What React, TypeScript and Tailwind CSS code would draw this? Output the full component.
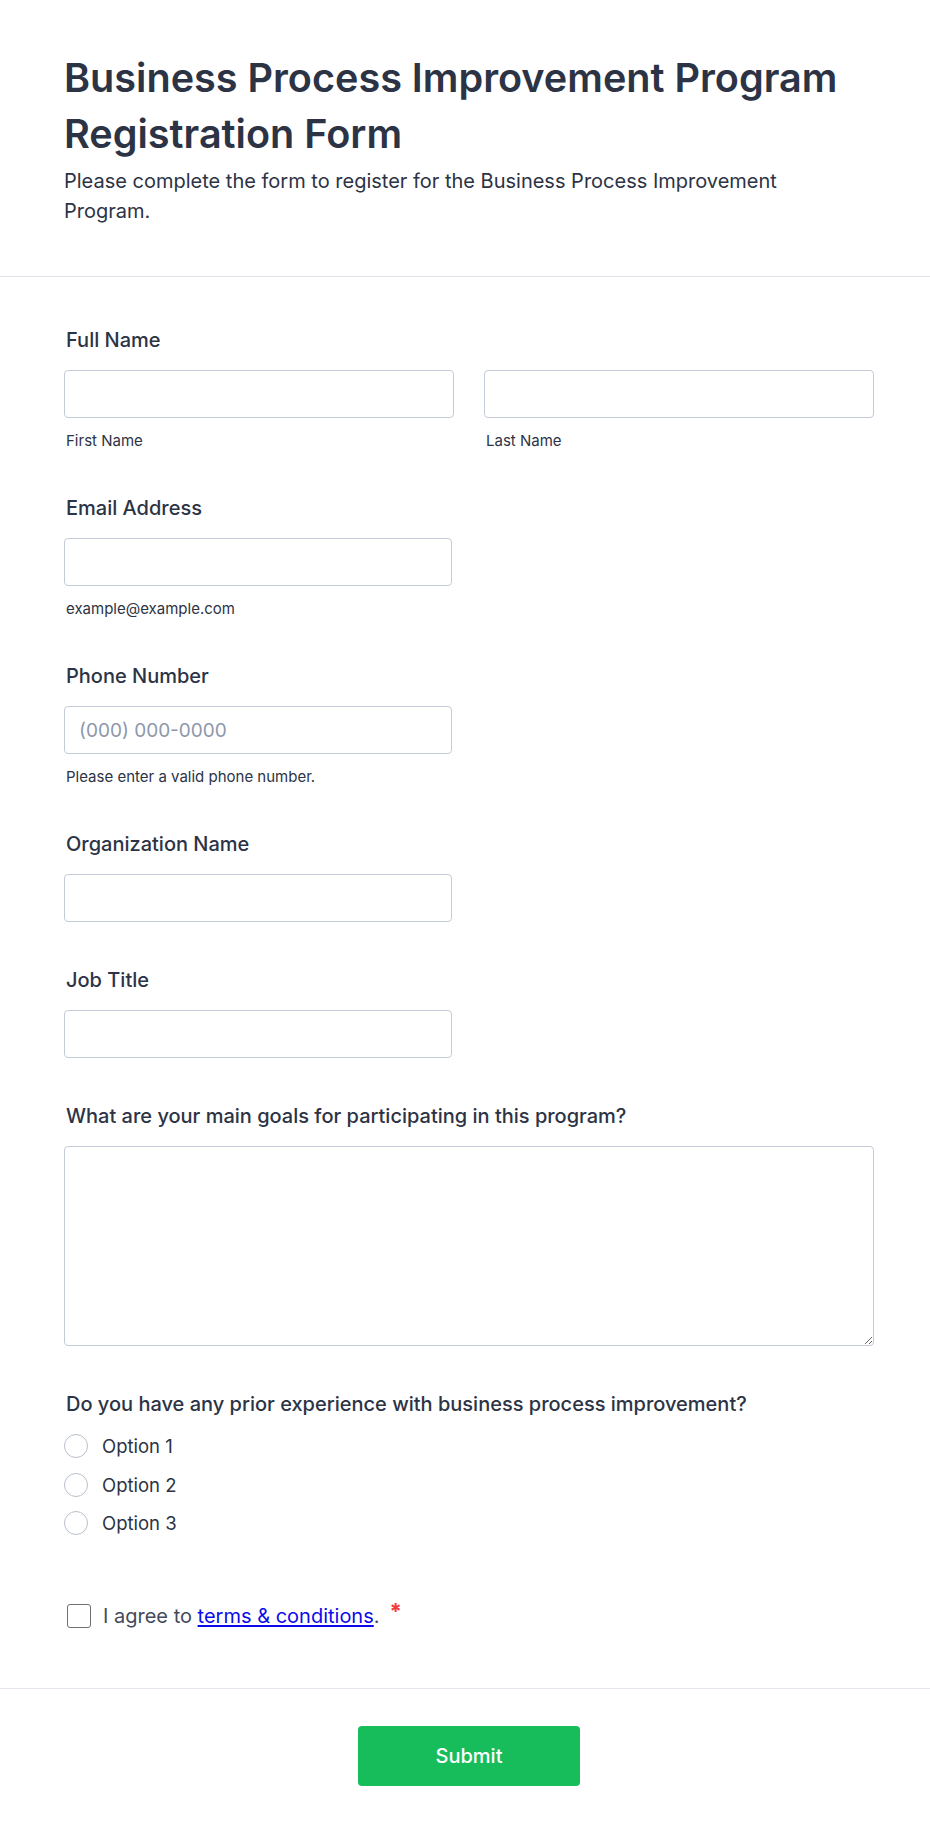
import { useState } from 'react';

const FONT = { fontFamily: 'Inter, "Noto Sans", sans-serif' };

function Label({ children }: { children: React.ReactNode }) {
  return (
    <label className="mb-[18px] block pl-[2px] text-[20px] font-medium leading-6 text-[#2c3345]">
      {children}
    </label>
  );
}

function SubLabel({ children }: { children: React.ReactNode }) {
  return (
    <span className="mt-[14px] block pl-[2px] text-[15px] leading-[18px] text-[#2c3345]">
      {children}
    </span>
  );
}

const inputCls =
  'block h-12 w-full rounded-[4px] border border-[#c3cad8] bg-white px-[14px] text-[19px] text-[#2c3345] outline-none placeholder:text-[#8d97ab] focus:border-[#4c7cf5]';

function TextField({
  label,
  sub,
  placeholder,
}: {
  label: string;
  sub?: string;
  placeholder?: string;
}) {
  return (
    <div className="mb-[46px]">
      <Label>{label}</Label>
      <div className="w-[388px]">
        <input type="text" className={inputCls} placeholder={placeholder} />
      </div>
      {sub && <SubLabel>{sub}</SubLabel>}
    </div>
  );
}

export default function App() {
  const [choice, setChoice] = useState<string | null>(null);
  const [agree, setAgree] = useState(false);

  return (
    <div className="min-h-screen w-[930px] bg-white" style={FONT}>
      {/* header */}
      <header className="border-b border-[#e0e2e9] pb-[50px] pl-16 pr-14 pt-[50px]">
        <h1 className="text-[39.6px] font-semibold leading-[56px] text-[#2c3345]">
          Business Process Improvement Program Registration Form
        </h1>
        <p className="mt-1 max-w-[740px] text-[20px] leading-[30px] text-[#2c3345]">
          Please complete the form to register for the Business Process Improvement Program.
        </p>
      </header>

      <form className="pl-16 pr-14 pt-[51px]" onSubmit={(e) => e.preventDefault()}>
        {/* full name */}
        <div className="mb-[46px]">
          <Label>Full Name</Label>
          <div className="grid grid-cols-2 gap-[30px]">
            <div>
              <input type="text" className={inputCls} />
              <SubLabel>First Name</SubLabel>
            </div>
            <div>
              <input type="text" className={inputCls} />
              <SubLabel>Last Name</SubLabel>
            </div>
          </div>
        </div>

        <TextField label="Email Address" sub="example@example.com" />
        <TextField
          label="Phone Number"
          sub="Please enter a valid phone number."
          placeholder="(000) 000-0000"
        />
        <TextField label="Organization Name" />
        <TextField label="Job Title" />

        <div className="mb-[46px]">
          <Label>What are your main goals for participating in this program?</Label>
          <textarea className="block h-[200px] w-full rounded-[4px] border border-[#c3cad8] bg-white px-[14px] py-3 text-[19px] text-[#2c3345] outline-none" />
        </div>

        <div>
          <Label>Do you have any prior experience with business process improvement?</Label>
          <div className="flex flex-col gap-[14.5px]">
            {['Option 1', 'Option 2', 'Option 3'].map((opt) => (
              <label key={opt} className="flex h-6 cursor-pointer items-center gap-[14px]">
                <input
                  type="radio"
                  name="experience"
                  className="sr-only"
                  checked={choice === opt}
                  onChange={() => setChoice(opt)}
                />
                <span className="flex h-6 w-6 items-center justify-center rounded-full border border-[#b9bfcc] bg-white">
                  {choice === opt && <span className="h-3 w-3 rounded-full bg-[#2e69ff]" />}
                </span>
                <span className="text-[18.5px] leading-6 text-[#2c3345]">{opt}</span>
              </label>
            ))}
          </div>
        </div>

        {/* terms */}
        <div className="mt-[68px] flex items-center pb-[60px] pl-[3px]">
          <button
            type="button"
            onClick={() => setAgree(!agree)}
            className="flex h-6 w-6 items-center justify-center rounded-[3px] border-[1.5px] border-[#6f6f6f] bg-white"
          >
            {agree && (
              <svg viewBox="0 0 16 16" className="h-4 w-4" fill="none" stroke="#2c3345" strokeWidth="2">
                <path d="M3 8.5l3.2 3L13 4.5" />
              </svg>
            )}
          </button>
          <span className="ml-3 text-[20px] leading-6 text-[#434a5b]">
            I agree to{' '}
            <a href="#" className="text-[#0b0bea] underline underline-offset-2">
              terms &amp; conditions
            </a>
            .
            <span className="relative -top-[4px] ml-[10px] text-[22px] font-bold text-[#f23a3c]">*</span>
          </span>
        </div>
      </form>

      {/* footer */}
      <div className="flex justify-center border-t border-[#e6e7ee] pb-[49px] pl-16 pr-14 pt-[37px]">
        <button
          type="submit"
          className="h-[60px] w-[222px] rounded-[4px] bg-[#18bd5b] text-[20px] font-medium text-white"
        >
          Submit
        </button>
      </div>
    </div>
  );
}
